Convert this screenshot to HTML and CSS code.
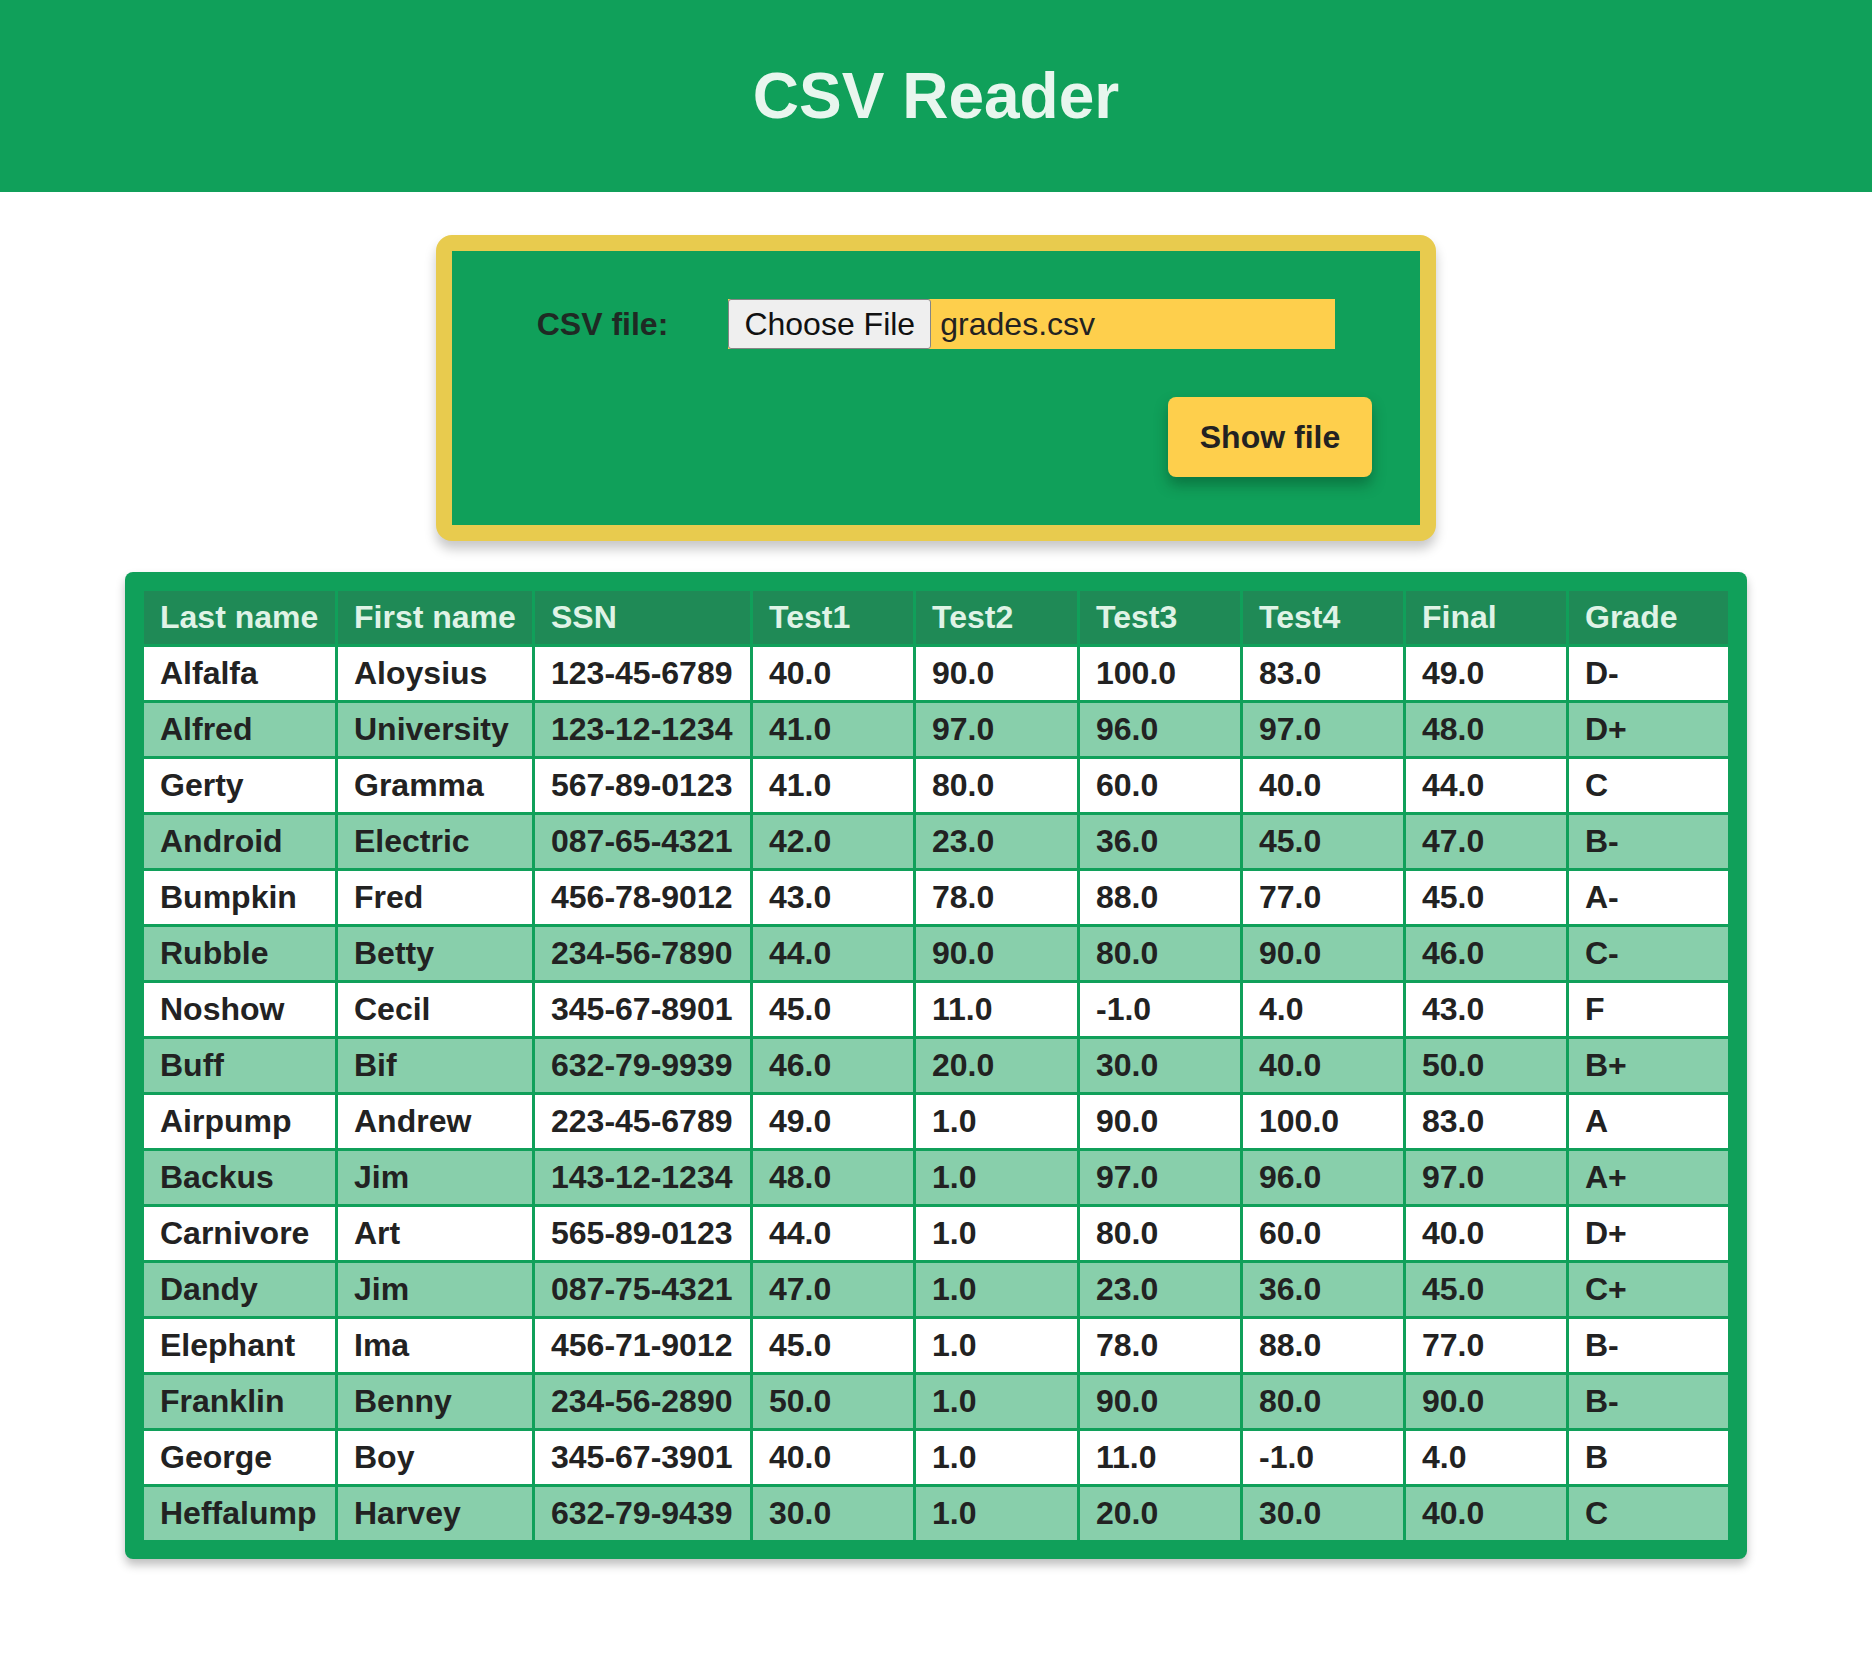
FILE: index.html
```html
<!DOCTYPE html>
<html lang="en">
<head>
<meta charset="utf-8">
<title>CSV Reader</title>
<link rel="stylesheet" href="styles.css">
</head>
<body>
<header class="top">
  <h1 class="title">CSV Reader</h1>
</header>
<main class="main">
  <form class="upload">
    <div class="upload-row">
      <label class="upload-label">CSV file:</label>
      <div class="file-input">
        <span class="file-btn">Choose File</span>
        <span class="file-name">grades.csv</span>
      </div>
    </div>
    <div class="upload-actions">
      <button type="button" class="show-btn">Show file</button>
    </div>
  </form>
  <section class="table-wrap">
    <table class="grades">
      <colgroup>
        <col class="c-last"><col class="c-first"><col class="c-ssn"><col class="c-num"><col class="c-num2"><col class="c-num"><col class="c-num"><col class="c-num"><col class="c-grade">
      </colgroup>
      <thead>
        <tr><th>Last name</th><th>First name</th><th>SSN</th><th>Test1</th><th>Test2</th><th>Test3</th><th>Test4</th><th>Final</th><th>Grade</th></tr>
      </thead>
      <tbody>
        <tr><td>Alfalfa</td><td>Aloysius</td><td>123-45-6789</td><td>40.0</td><td>90.0</td><td>100.0</td><td>83.0</td><td>49.0</td><td>D-</td></tr>
        <tr><td>Alfred</td><td>University</td><td>123-12-1234</td><td>41.0</td><td>97.0</td><td>96.0</td><td>97.0</td><td>48.0</td><td>D+</td></tr>
        <tr><td>Gerty</td><td>Gramma</td><td>567-89-0123</td><td>41.0</td><td>80.0</td><td>60.0</td><td>40.0</td><td>44.0</td><td>C</td></tr>
        <tr><td>Android</td><td>Electric</td><td>087-65-4321</td><td>42.0</td><td>23.0</td><td>36.0</td><td>45.0</td><td>47.0</td><td>B-</td></tr>
        <tr><td>Bumpkin</td><td>Fred</td><td>456-78-9012</td><td>43.0</td><td>78.0</td><td>88.0</td><td>77.0</td><td>45.0</td><td>A-</td></tr>
        <tr><td>Rubble</td><td>Betty</td><td>234-56-7890</td><td>44.0</td><td>90.0</td><td>80.0</td><td>90.0</td><td>46.0</td><td>C-</td></tr>
        <tr><td>Noshow</td><td>Cecil</td><td>345-67-8901</td><td>45.0</td><td>11.0</td><td>-1.0</td><td>4.0</td><td>43.0</td><td>F</td></tr>
        <tr><td>Buff</td><td>Bif</td><td>632-79-9939</td><td>46.0</td><td>20.0</td><td>30.0</td><td>40.0</td><td>50.0</td><td>B+</td></tr>
        <tr><td>Airpump</td><td>Andrew</td><td>223-45-6789</td><td>49.0</td><td>1.0</td><td>90.0</td><td>100.0</td><td>83.0</td><td>A</td></tr>
        <tr><td>Backus</td><td>Jim</td><td>143-12-1234</td><td>48.0</td><td>1.0</td><td>97.0</td><td>96.0</td><td>97.0</td><td>A+</td></tr>
        <tr><td>Carnivore</td><td>Art</td><td>565-89-0123</td><td>44.0</td><td>1.0</td><td>80.0</td><td>60.0</td><td>40.0</td><td>D+</td></tr>
        <tr><td>Dandy</td><td>Jim</td><td>087-75-4321</td><td>47.0</td><td>1.0</td><td>23.0</td><td>36.0</td><td>45.0</td><td>C+</td></tr>
        <tr><td>Elephant</td><td>Ima</td><td>456-71-9012</td><td>45.0</td><td>1.0</td><td>78.0</td><td>88.0</td><td>77.0</td><td>B-</td></tr>
        <tr><td>Franklin</td><td>Benny</td><td>234-56-2890</td><td>50.0</td><td>1.0</td><td>90.0</td><td>80.0</td><td>90.0</td><td>B-</td></tr>
        <tr><td>George</td><td>Boy</td><td>345-67-3901</td><td>40.0</td><td>1.0</td><td>11.0</td><td>-1.0</td><td>4.0</td><td>B</td></tr>
        <tr><td>Heffalump</td><td>Harvey</td><td>632-79-9439</td><td>30.0</td><td>1.0</td><td>20.0</td><td>30.0</td><td>40.0</td><td>C</td></tr>
      </tbody>
    </table>
  </section>
</main>
</body>
</html>
```

FILE: styles.css
```css
* {
  box-sizing: border-box;
}

html, body {
  margin: 0;
  padding: 0;
  background: #ffffff;
}

body {
  font-family: "Liberation Sans", Arial, sans-serif;
  color: #222222;
}

.top {
  background: #10a05a;
  padding: 59px 0;
  text-align: center;
}

.title {
  margin: 0;
  font-size: 64px;
  font-weight: bold;
  line-height: 74px;
  color: #e8f6ee;
}

.main {
  display: flex;
  flex-direction: column;
  align-items: center;
  padding-top: 43px;
  padding-bottom: 40px;
}

.upload {
  width: 1000px;
  background: #10a05a;
  border: 16px solid #e8cb4e;
  border-radius: 16px;
  padding: 48px;
  box-shadow: 0 8px 12px rgba(0, 0, 0, 0.22);
  display: flex;
  flex-direction: column;
  gap: 48px;
}

.upload-row {
  display: flex;
  align-items: center;
  justify-content: center;
  gap: 60px;
  height: 50px;
}

.upload-label {
  font-size: 32px;
  font-weight: bold;
  color: #1f2a24;
}

.file-input {
  width: 607px;
  height: 50px;
  background: #fecf4c;
  display: flex;
  align-items: center;
  font-size: 32px;
  color: #222222;
}

.file-btn {
  height: 50px;
  width: 203px;
  display: flex;
  align-items: center;
  justify-content: center;
  background: #efefef;
  border: 1.5px solid #858585;
  border-radius: 3px;
  color: #111111;
  margin-right: 9px;
}

.file-name {
  color: #222222;
}

.upload-actions {
  display: flex;
  justify-content: flex-end;
}

.show-btn {
  font-family: "Liberation Sans", Arial, sans-serif;
  font-size: 32px;
  font-weight: bold;
  color: #222222;
  background: #fecf4c;
  border: none;
  border-radius: 8px;
  width: 204px;
  height: 80px;
  padding: 0;
  box-shadow: 0 8px 14px rgba(0, 40, 20, 0.35);
}

.table-wrap {
  margin-top: 31px;
  width: 1622px;
  background: #10a05a;
  border-radius: 8px;
  padding: 16px;
  box-shadow: 0 6px 10px rgba(0, 0, 0, 0.25);
}

.grades {
  width: 100%;
  table-layout: fixed;
  border-collapse: separate;
  border-spacing: 3px;
  font-size: 32px;
}

.c-last { width: 191px; }
.c-first { width: 194px; }
.c-ssn { width: 215px; }
.c-num { width: 160px; }
.c-num2 { width: 161px; }
.c-grade { width: 159px; }

.grades th,
.grades td {
  padding: 8px 16px;
  text-align: left;
  font-weight: bold;
  line-height: 37px;
  white-space: nowrap;
}

.grades th {
  background: #1f8a56;
  color: #dff3e6;
}

.grades tbody tr:nth-child(odd) td {
  background: #ffffff;
  color: #222222;
}

.grades tbody tr:nth-child(even) td {
  background: #88cfab;
  color: #222222;
}
```
